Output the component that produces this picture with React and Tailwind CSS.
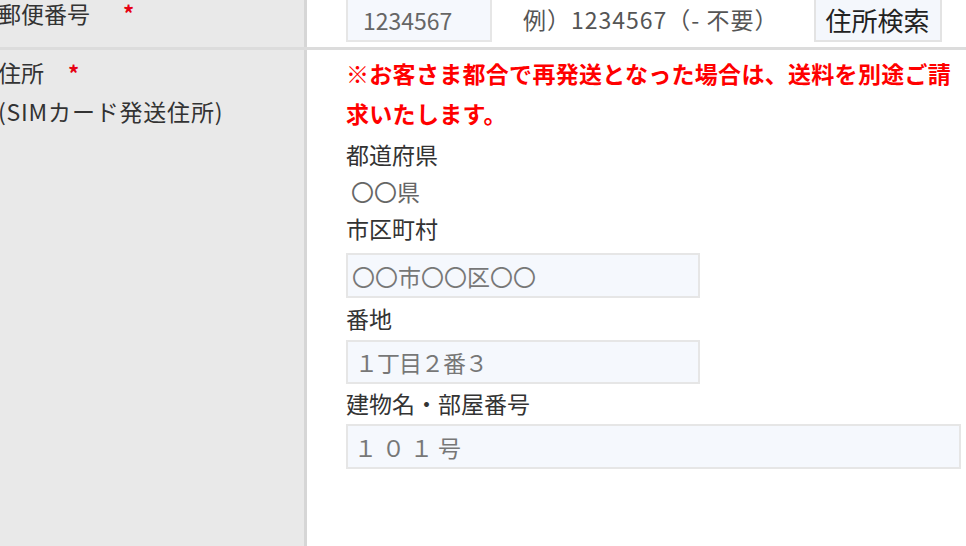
export default function App() {
  const font = { fontFamily: '"Noto Sans CJK JP", "Noto Sans", sans-serif' };

  return (
    <div className="h-screen w-full overflow-hidden bg-white" style={font}>
      <div className="-mt-[9px] flex flex-col text-[23px] text-[#333]">
        {/* 郵便番号 */}
        <div className="flex h-[59px] border-b-[3px] border-[#dcdcdc]">
          <div className="w-[307px] shrink-0 bg-[#e9e9e9] border-r-[3px] border-[#d6d6d6] pt-[2px]">
            <div className="-ml-[2px] flex items-start leading-[40px]">
              <span>郵便番号</span>
              <span className="ml-[33px] mt-[4px] text-[22px] font-bold leading-[30px] text-[#e60012]">*</span>
            </div>
          </div>
          <div className="flex flex-1 items-start pl-[39px] pt-[6px]">
            <input
              className="h-[45px] w-[146px] border-2 border-[#e6e6e6] bg-[#f5f8fd] pl-[15px] text-[#555] outline-none placeholder:text-[#666]"
              placeholder="1234567"
            />
            <span className="ml-[31px] leading-[44px] tracking-[1px] text-[#555]">例）1234567（- 不要）</span>
            <button className="ml-[35px] h-[45px] w-[128px] border-2 border-[#e3e3e3] bg-[#f4f7fc] text-[26px] leading-[40px] text-[#222]">
              住所検索
            </button>
          </div>
        </div>

        {/* 住所 */}
        <div className="flex h-[496px]">
          <div className="w-[307px] shrink-0 bg-[#e9e9e9] border-r-[3px] border-[#d6d6d6] pt-[3px]">
            <div className="-ml-[2px] leading-[39px]">
              <div className="flex items-start">
                <span>住所</span>
                <span className="ml-[24px] mt-[4px] text-[22px] font-bold leading-[30px] text-[#e60012]">*</span>
              </div>
              <div className="tracking-[0.8px]">(SIMカード発送住所)</div>
            </div>
          </div>
          <div className="flex flex-1 flex-col pl-[39px] pr-[5px] pt-[3px]">
            <p className="font-bold leading-[40px] tracking-[0.3px] text-[#ff0000]">
              ※お客さま都合で再発送となった場合は、送料を別途ご請求いたします。
            </p>
            <div className="flex h-[42px] items-center">都道府県</div>
            <div className="flex h-[32px] items-center pl-[5px] text-[#666]">〇〇県</div>
            <div className="flex h-[46px] items-center pb-[4px]">市区町村</div>
            <input
              className="h-[45px] w-[354px] border-2 border-[#e6e6e6] bg-[#f5f8fd] pl-[4px] outline-none placeholder:text-[#777]"
              placeholder="〇〇市〇〇区〇〇"
            />
            <div className="flex h-[42px] items-center pb-[2px]">番地</div>
            <input
              className="h-[44px] w-[354px] border-2 border-[#e6e6e6] bg-[#f5f8fd] pl-[7px] tracking-[-1px] outline-none placeholder:text-[#777]"
              placeholder="１丁目２番３"
            />
            <div className="flex h-[40px] items-center pb-[1px]">建物名・部屋番号</div>
            <input
              className="h-[45px] w-full border-2 border-[#e6e6e6] bg-[#f5f8fd] pl-[6px] tracking-[5px] outline-none placeholder:text-[#777]"
              placeholder="１０１号"
            />
          </div>
        </div>
      </div>
    </div>
  );
}
